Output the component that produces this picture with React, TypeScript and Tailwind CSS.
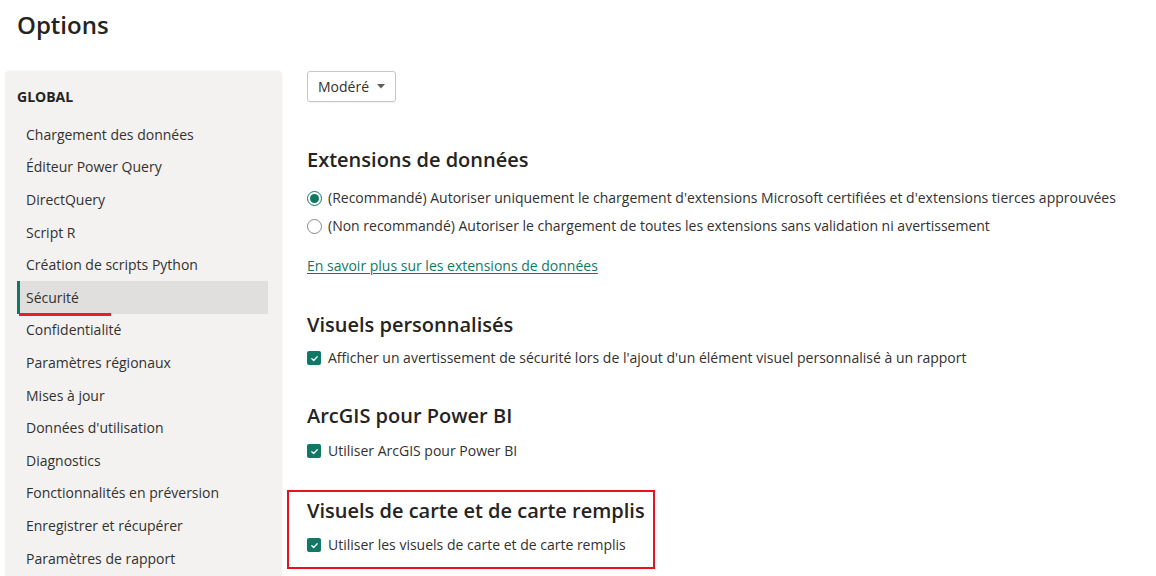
const navItems = [
  "Chargement des données",
  "Éditeur Power Query",
  "DirectQuery",
  "Script R",
  "Création de scripts Python",
  "Sécurité",
  "Confidentialité",
  "Paramètres régionaux",
  "Mises à jour",
  "Données d'utilisation",
  "Diagnostics",
  "Fonctionnalités en préversion",
  "Enregistrer et récupérer",
  "Paramètres de rapport",
];

function Check() {
  return (
    <span className="flex h-[14px] w-[14px] shrink-0 items-center justify-center rounded-[2px] bg-[#117865]">
      <svg width="9" height="9" viewBox="0 0 10 10" fill="none">
        <path d="M2 5.2 4.1 7.2 8 3" stroke="white" strokeWidth="1.4" strokeLinecap="round" strokeLinejoin="round" />
      </svg>
    </span>
  );
}

function Radio({ on }: { on?: boolean }) {
  return (
    <span
      className={
        on
          ? "flex h-[15px] w-[15px] shrink-0 items-center justify-center rounded-full border border-[#117865]"
          : "h-[15px] w-[15px] shrink-0 rounded-full border border-[#8a8886]"
      }
    >
      {on && <span className="h-[9px] w-[9px] rounded-full bg-[#117865]" />}
    </span>
  );
}

function CheckRow({ label }: { label: string }) {
  return (
    <div className="flex items-center gap-[7px]">
      <Check />
      <span>{label}</span>
    </div>
  );
}

export default function App() {
  return (
    <main
      className="h-[576px] w-[1156px] overflow-hidden bg-white text-[14px] text-[#323130]"
      style={{ fontFamily: '"Open Sans", "Noto Sans", sans-serif' }}
    >
      <h1 className="pl-[17px] pt-[8px] text-[24px] font-semibold leading-[34px] text-[#252423]">Options</h1>

      <div className="mt-[29px] flex">
        <aside className="ml-[5px] h-[520px] w-[276px] shrink-0 rounded-t-[4px] bg-[#f3f2f1] pt-[16px] shadow-[1px_0_2px_rgba(0,0,0,0.08)]">
          <div className="pl-[12px] text-[14px] font-bold leading-[20px] text-[#252423]">GLOBAL</div>
          <ul className="mt-[11px]">
            {navItems.map((item) =>
              item === "Sécurité" ? (
                <li key={item} className="relative ml-[12px] mr-[13px] flex h-[32.6px] items-center border-l-[3px] border-[#117865] bg-[#e1dfdd] pl-[6px]">
                  {item}
                  <span className="absolute bottom-[-2px] left-[-1px] h-[3px] w-[92px] bg-[#ee1c25]" />
                </li>
              ) : (
                <li key={item} className="flex h-[32.6px] items-center pl-[21px]">
                  {item}
                </li>
              )
            )}
          </ul>
        </aside>

        <section className="flex-1 pl-[26px]">
          <button className="flex h-[31px] items-center gap-[8px] rounded-[3px] border border-[#c8c6c4] px-[10px] text-[14px] text-[#323130] shadow-[0_1px_1px_rgba(0,0,0,0.05)]">
            Modéré
            <svg width="8" height="5" viewBox="0 0 8 5">
              <path d="M0 0h8L4 4.5z" fill="#605e5c" />
            </svg>
          </button>

          <h2 className="mt-[44px] text-[20px] font-semibold leading-[28px] text-[#252423]">Extensions de données</h2>
          <div className="mt-[14px] flex items-center gap-[6px] leading-[20px]">
            <Radio on />
            <span>(Recommandé) Autoriser uniquement le chargement d'extensions Microsoft certifiées et d'extensions tierces approuvées</span>
          </div>
          <div className="mt-[8px] flex items-center gap-[6px] leading-[20px]">
            <Radio />
            <span>(Non recommandé) Autoriser le chargement de toutes les extensions sans validation ni avertissement</span>
          </div>
          <a className="mt-[20px] block w-fit leading-[20px] text-[#117865] underline underline-offset-2">
            En savoir plus sur les extensions de données
          </a>

          <h2 className="mt-[35px] text-[20px] font-semibold leading-[28px] text-[#252423]">Visuels personnalisés</h2>
          <div className="mt-[9px] leading-[20px]">
            <CheckRow label="Afficher un avertissement de sécurité lors de l'ajout d'un élément visuel personnalisé à un rapport" />
          </div>

          <h2 className="mt-[34px] text-[20px] font-semibold leading-[28px] text-[#252423]">ArcGIS pour Power BI</h2>
          <div className="mt-[11px] leading-[20px]">
            <CheckRow label="Utiliser ArcGIS pour Power BI" />
          </div>

          <div className="ml-[-20px] mt-[29px] w-[368px] border-[2px] border-[#e81123] pb-[12px] pl-[18px] pt-[5px]">
            <h2 className="text-[20px] font-semibold leading-[28px] text-[#252423]">Visuels de carte et de carte remplis</h2>
            <div className="mt-[10px] leading-[20px]">
              <CheckRow label="Utiliser les visuels de carte et de carte remplis" />
            </div>
          </div>
        </section>
      </div>
    </main>
  );
}
